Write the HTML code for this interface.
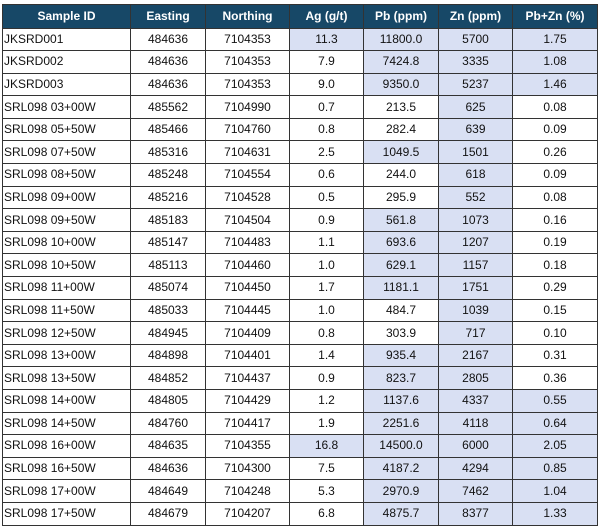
<!DOCTYPE html>
<html><head><meta charset="utf-8"><style>
html,body{margin:0;padding:0;background:#fff;width:602px;height:530px;overflow:hidden}
table{position:absolute;left:2px;top:4px;border-collapse:collapse;table-layout:fixed;font-family:"Liberation Sans",sans-serif;font-size:12px;color:#111}
td,th{border:1px solid #333;padding:0;text-align:center;height:21.6px;line-height:21px;white-space:nowrap;overflow:hidden}
th{background:#174867;color:#fff;font-weight:bold;height:22.5px;font-size:12px}
td:first-child{text-align:left;padding-left:1px}
.s{background:#d9e0f3}
</style></head><body>
<table>
<colgroup><col style="width:128px"><col style="width:75px"><col style="width:84px"><col style="width:74px"><col style="width:75px"><col style="width:74px"><col style="width:85px"></colgroup>
<tr><th>Sample ID</th><th>Easting</th><th>Northing</th><th>Ag (g/t)</th><th>Pb (ppm)</th><th>Zn (ppm)</th><th>Pb+Zn (%)</th></tr>
<tr><td>JKSRD001</td><td>484636</td><td>7104353</td><td class="s">11.3</td><td class="s">11800.0</td><td class="s">5700</td><td class="s">1.75</td></tr>
<tr><td>JKSRD002</td><td>484636</td><td>7104353</td><td>7.9</td><td class="s">7424.8</td><td class="s">3335</td><td class="s">1.08</td></tr>
<tr><td>JKSRD003</td><td>484636</td><td>7104353</td><td>9.0</td><td class="s">9350.0</td><td class="s">5237</td><td class="s">1.46</td></tr>
<tr><td>SRL098 03+00W</td><td>485562</td><td>7104990</td><td>0.7</td><td>213.5</td><td class="s">625</td><td>0.08</td></tr>
<tr><td>SRL098 05+50W</td><td>485466</td><td>7104760</td><td>0.8</td><td>282.4</td><td class="s">639</td><td>0.09</td></tr>
<tr><td>SRL098 07+50W</td><td>485316</td><td>7104631</td><td>2.5</td><td class="s">1049.5</td><td class="s">1501</td><td>0.26</td></tr>
<tr><td>SRL098 08+50W</td><td>485248</td><td>7104554</td><td>0.6</td><td>244.0</td><td class="s">618</td><td>0.09</td></tr>
<tr><td>SRL098 09+00W</td><td>485216</td><td>7104528</td><td>0.5</td><td>295.9</td><td class="s">552</td><td>0.08</td></tr>
<tr><td>SRL098 09+50W</td><td>485183</td><td>7104504</td><td>0.9</td><td class="s">561.8</td><td class="s">1073</td><td>0.16</td></tr>
<tr><td>SRL098 10+00W</td><td>485147</td><td>7104483</td><td>1.1</td><td class="s">693.6</td><td class="s">1207</td><td>0.19</td></tr>
<tr><td>SRL098 10+50W</td><td>485113</td><td>7104460</td><td>1.0</td><td class="s">629.1</td><td class="s">1157</td><td>0.18</td></tr>
<tr><td>SRL098 11+00W</td><td>485074</td><td>7104450</td><td>1.7</td><td class="s">1181.1</td><td class="s">1751</td><td>0.29</td></tr>
<tr><td>SRL098 11+50W</td><td>485033</td><td>7104445</td><td>1.0</td><td>484.7</td><td class="s">1039</td><td>0.15</td></tr>
<tr><td>SRL098 12+50W</td><td>484945</td><td>7104409</td><td>0.8</td><td>303.9</td><td class="s">717</td><td>0.10</td></tr>
<tr><td>SRL098 13+00W</td><td>484898</td><td>7104401</td><td>1.4</td><td class="s">935.4</td><td class="s">2167</td><td>0.31</td></tr>
<tr><td>SRL098 13+50W</td><td>484852</td><td>7104437</td><td>0.9</td><td class="s">823.7</td><td class="s">2805</td><td>0.36</td></tr>
<tr><td>SRL098 14+00W</td><td>484805</td><td>7104429</td><td>1.2</td><td class="s">1137.6</td><td class="s">4337</td><td class="s">0.55</td></tr>
<tr><td>SRL098 14+50W</td><td>484760</td><td>7104417</td><td>1.9</td><td class="s">2251.6</td><td class="s">4118</td><td class="s">0.64</td></tr>
<tr><td>SRL098 16+00W</td><td>484635</td><td>7104355</td><td class="s">16.8</td><td class="s">14500.0</td><td class="s">6000</td><td class="s">2.05</td></tr>
<tr><td>SRL098 16+50W</td><td>484636</td><td>7104300</td><td>7.5</td><td class="s">4187.2</td><td class="s">4294</td><td class="s">0.85</td></tr>
<tr><td>SRL098 17+00W</td><td>484649</td><td>7104248</td><td>5.3</td><td class="s">2970.9</td><td class="s">7462</td><td class="s">1.04</td></tr>
<tr><td>SRL098 17+50W</td><td>484679</td><td>7104207</td><td>6.8</td><td class="s">4875.7</td><td class="s">8377</td><td class="s">1.33</td></tr>
</table>
</body></html>
